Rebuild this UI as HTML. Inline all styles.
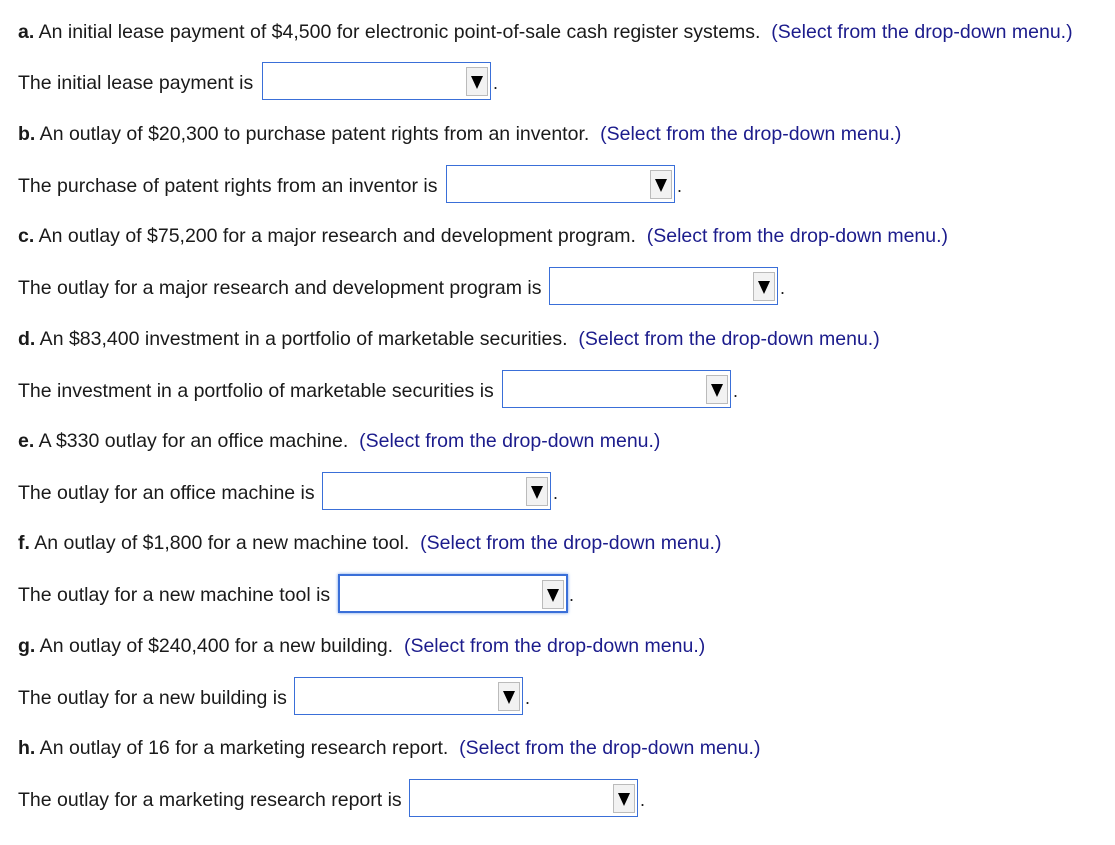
<!DOCTYPE html>
<html><head><style>
body{margin:0;width:1115px;height:845px;background:#fff;font-family:"Liberation Sans",Arial,sans-serif;font-size:19.5px;color:#1a1a1a;position:relative}
.l{position:absolute;left:18px;white-space:nowrap;line-height:22px;margin-top:1px}
.s{color:#1c1c8c}
.box{position:absolute;width:227px;height:36px;border:1px solid #3a6fd8;background:#fff}
.box .a{position:absolute;right:2px;top:4px;width:20px;height:27px;border:1px solid #bbb;background:#f2f2f2}
.box .a:after{content:"";position:absolute;left:4px;top:8px;border-left:6px solid transparent;border-right:6px solid transparent;border-top:13px solid #000}
.d{position:absolute;font-size:18px}
</style></head><body>
<div class="l" style="top:20px"><b>a.</b> An initial lease payment of $4,500 for electronic point-of-sale cash register systems.&nbsp; <span class="s">(Select from the drop-down menu.)</span></div>
<div class="l" style="top:71px">The initial lease payment is</div>
<div class="box" style="left:262px;top:62px"><div class="a"></div></div><div class="d" style="left:493px;top:73px">.</div>

<div class="l" style="top:122px"><b>b.</b> An outlay of $20,300 to purchase patent rights from an inventor.&nbsp; <span class="s">(Select from the drop-down menu.)</span></div>
<div class="l" style="top:174px">The purchase of patent rights from an inventor is</div>
<div class="box" style="left:446px;top:165px"><div class="a"></div></div><div class="d" style="left:677px;top:176px">.</div>

<div class="l" style="top:224px"><b>c.</b> An outlay of $75,200 for a major research and development program.&nbsp; <span class="s">(Select from the drop-down menu.)</span></div>
<div class="l" style="top:276px">The outlay for a major research and development program is</div>
<div class="box" style="left:549px;top:267px"><div class="a"></div></div><div class="d" style="left:780px;top:278px">.</div>

<div class="l" style="top:327px"><b>d.</b> An $83,400 investment in a portfolio of marketable securities.&nbsp; <span class="s">(Select from the drop-down menu.)</span></div>
<div class="l" style="top:379px">The investment in a portfolio of marketable securities is</div>
<div class="box" style="left:502px;top:370px"><div class="a"></div></div><div class="d" style="left:733px;top:381px">.</div>

<div class="l" style="top:429px"><b>e.</b> A $330 outlay for an office machine.&nbsp; <span class="s">(Select from the drop-down menu.)</span></div>
<div class="l" style="top:481px">The outlay for an office machine is</div>
<div class="box" style="left:322px;top:472px"><div class="a"></div></div><div class="d" style="left:553px;top:483px">.</div>

<div class="l" style="top:531px"><b>f.</b> An outlay of $1,800 for a new machine tool.&nbsp; <span class="s">(Select from the drop-down menu.)</span></div>
<div class="l" style="top:583px">The outlay for a new machine tool is</div>
<div class="box" style="left:338px;top:574px;border:2px solid #3a6fd8;box-shadow:0 0 3px #6f9be8;width:226px;height:35px"><div class="a"></div></div><div class="d" style="left:569px;top:585px">.</div>

<div class="l" style="top:634px"><b>g.</b> An outlay of $240,400 for a new building.&nbsp; <span class="s">(Select from the drop-down menu.)</span></div>
<div class="l" style="top:686px">The outlay for a new building is</div>
<div class="box" style="left:294px;top:677px"><div class="a"></div></div><div class="d" style="left:525px;top:688px">.</div>

<div class="l" style="top:736px"><b>h.</b> An outlay of 16 for a marketing research report.&nbsp; <span class="s">(Select from the drop-down menu.)</span></div>
<div class="l" style="top:788px">The outlay for a marketing research report is</div>
<div class="box" style="left:409px;top:779px"><div class="a"></div></div><div class="d" style="left:640px;top:790px">.</div>
</body></html>
